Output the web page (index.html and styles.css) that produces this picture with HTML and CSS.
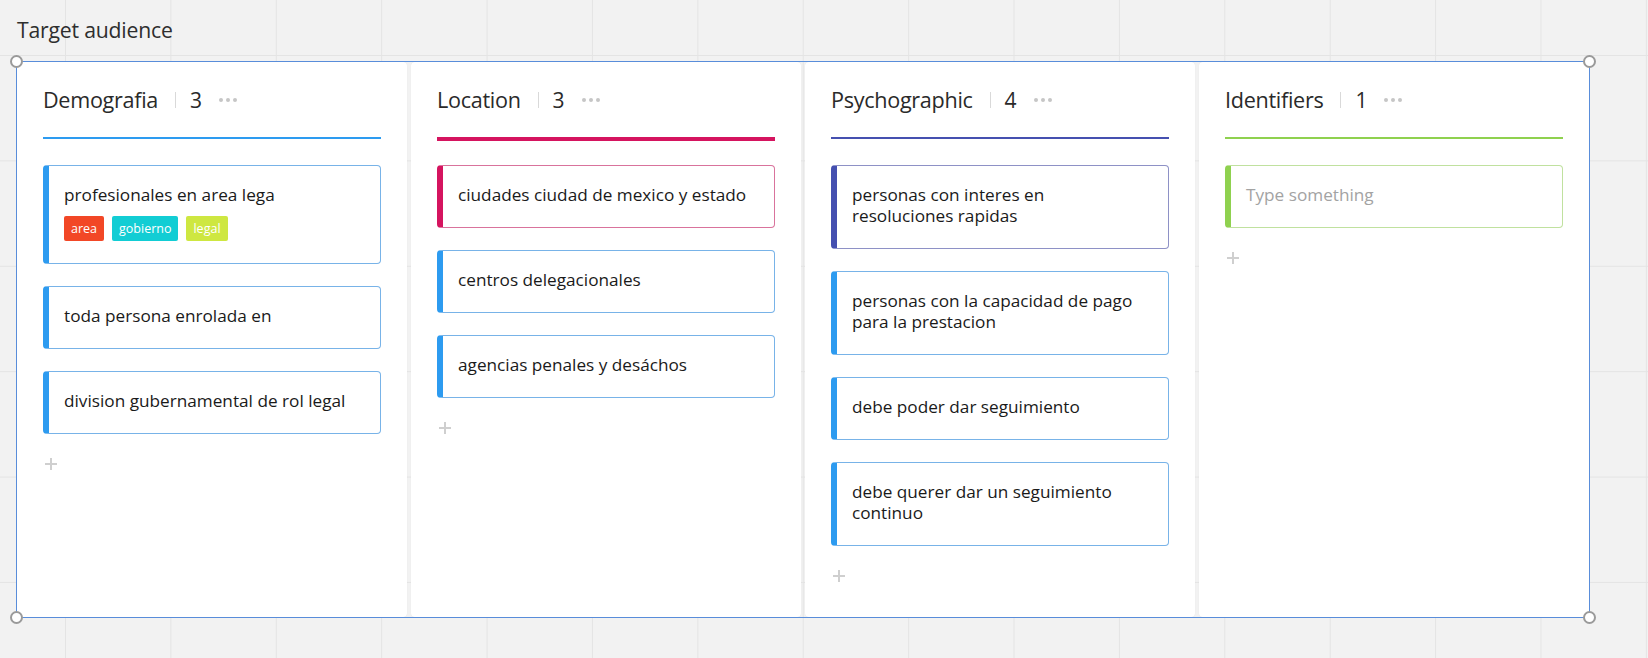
FILE: index.html
```html
<!DOCTYPE html>
<html lang="en">
<head>
<meta charset="utf-8">
<title>Target audience</title>
<link rel="stylesheet" href="styles.css">
</head>
<body>
<div class="board">
  <div class="frame-title">Target audience</div>
  <div class="frame">
    <span class="handle tl"></span>
    <span class="handle tr"></span>
    <span class="handle bl"></span>
    <span class="handle br"></span>

    <section class="column">
      <header class="col-head blue">
        <span class="col-title">Demografia</span>
        <span class="sep"></span>
        <span class="count">3</span>
        <span class="dots"><i></i><i></i><i></i></span>
      </header>
      <div class="cards">
        <div class="card c-blue">
          <div class="card-text">profesionales en area lega</div>
          <div class="tags">
            <span class="tag t-red">area</span>
            <span class="tag t-cyan">gobierno</span>
            <span class="tag t-lime">legal</span>
          </div>
        </div>
        <div class="card c-blue"><div class="card-text">toda persona enrolada en</div></div>
        <div class="card c-blue"><div class="card-text">division gubernamental de rol legal</div></div>
        <div class="add"><span class="plus"></span></div>
      </div>
    </section>

    <section class="column">
      <header class="col-head pink">
        <span class="col-title">Location</span>
        <span class="sep"></span>
        <span class="count">3</span>
        <span class="dots"><i></i><i></i><i></i></span>
      </header>
      <div class="cards">
        <div class="card c-pink"><div class="card-text">ciudades ciudad de mexico y estado</div></div>
        <div class="card c-blue"><div class="card-text">centros delegacionales</div></div>
        <div class="card c-blue"><div class="card-text">agencias penales y desáchos</div></div>
        <div class="add"><span class="plus"></span></div>
      </div>
    </section>

    <section class="column">
      <header class="col-head purple">
        <span class="col-title">Psychographic</span>
        <span class="sep"></span>
        <span class="count">4</span>
        <span class="dots"><i></i><i></i><i></i></span>
      </header>
      <div class="cards">
        <div class="card c-purple"><div class="card-text">personas con interes en<br>resoluciones rapidas</div></div>
        <div class="card c-blue"><div class="card-text">personas con la capacidad de pago<br>para la prestacion</div></div>
        <div class="card c-blue"><div class="card-text">debe poder dar seguimiento</div></div>
        <div class="card c-blue"><div class="card-text">debe querer dar un seguimiento<br>continuo</div></div>
        <div class="add"><span class="plus"></span></div>
      </div>
    </section>

    <section class="column">
      <header class="col-head green">
        <span class="col-title">Identifiers</span>
        <span class="sep"></span>
        <span class="count">1</span>
        <span class="dots"><i></i><i></i><i></i></span>
      </header>
      <div class="cards">
        <div class="card c-green"><div class="card-text placeholder">Type something</div></div>
        <div class="add"><span class="plus"></span></div>
      </div>
    </section>
  </div>
</div>
</body>
</html>
```
FILE: styles.css
```css
* { box-sizing: border-box; }

html, body {
  margin: 0;
  padding: 0;
}

body {
  width: 1648px;
  height: 658px;
  overflow: hidden;
  font-family: "Open Sans", "Noto Sans", "DejaVu Sans", sans-serif;
  color: #1f1f1f;
  background-color: #f2f2f2;
  background-image:
    linear-gradient(to right, #e4e4e4 1px, transparent 1px),
    linear-gradient(to bottom, #e4e4e4 1px, transparent 1px);
  background-size: 105.4px 105.4px;
  background-position: 65px 55px;
}

.board {
  padding: 0 0 0 16px;
}

.frame-title {
  height: 61px;
  padding: 15px 0 0 1px;
  font-size: 21.2px;
  line-height: 30px;
  color: #2e2e2e;
  letter-spacing: -0.2px;
}

.frame {
  position: relative;
  width: 1574px;
  height: 557px;
  border: 1px solid #5a8fdc;
  display: flex;
  gap: 4px;
}

.handle {
  position: absolute;
  width: 13px;
  height: 13px;
  border-radius: 50%;
  border: 2px solid #9a9a9a;
  background: #fff;
  z-index: 2;
}
.handle.tl { left: -7px; top: -7px; }
.handle.tr { right: -7px; top: -7px; }
.handle.bl { left: -7px; bottom: -7px; }
.handle.br { right: -7px; bottom: -7px; }

.column {
  flex: 0 0 390px;
  background: #fff;
  border-radius: 4px;
  padding: 0 26px;
  box-shadow: 0 0 1px rgba(0,0,0,0.08);
}

.col-head {
  height: 77px;
  display: flex;
  align-items: center;
  padding: 0;
  border-bottom: 2px solid #2d9bf0;
}
.col-head.blue { border-bottom-color: #2d9bf0; }
.col-head.pink { border-bottom: 4px solid #d5145f; height: 79px; }
.col-head.purple { border-bottom-color: #4550b0; }
.col-head.green { border-bottom-color: #8fd14f; }

.col-title {
  font-size: 21.6px;
  line-height: 30px;
  color: #2a2a2a;
  letter-spacing: -0.3px;
}

.sep {
  width: 1px;
  height: 16px;
  background: #d9d9d9;
  margin: 0 14px 0 17px;
}

.count {
  font-size: 21px;
  line-height: 30px;
  color: #2a2a2a;
}

.dots {
  display: flex;
  gap: 3px;
  margin-left: 17px;
}
.dots i {
  width: 4px;
  height: 4px;
  border-radius: 50%;
  background: #c6c6c6;
}

.cards {
  padding-top: 26px;
  display: flex;
  flex-direction: column;
  gap: 22px;
}
.col-head.pink + .cards { padding-top: 24px; }

.card {
  border: 1px solid #78b3e8;
  border-left: 6px solid #2d9bf0;
  border-radius: 4px;
  padding: 18px 12px 22px 15px;
  background: #fff;
}
.card.c-blue { border-color: #78b3e8; border-left-color: #2d9bf0; }
.card.c-pink { border-color: #d9739c; border-left-color: #d5145f; }
.card.c-purple { border-color: #8e91c6; border-left-color: #4550b0; }
.card.c-green { border-color: #c0e19f; border-left-color: #8fd14f; }

.card-text {
  font-size: 17.2px;
  line-height: 21px;
  color: #1a1a1a;
  letter-spacing: 0;
  white-space: nowrap;
}
.card-text.placeholder { color: #a3a3a3; }

.tags {
  display: flex;
  gap: 8px;
  margin-top: 11px;
}
.tag {
  height: 25px;
  line-height: 25px;
  padding: 0 7px;
  font-size: 12.5px;
  color: #fff;
  border-radius: 2px;
}
.t-red { background: #f24726; }
.t-cyan { background: #12cdd4; }
.t-lime { background: #cee741; }

.add {
  height: 20px;
  display: flex;
  align-items: center;
  padding-left: 2px;
  margin-top: -2px;
}
.plus {
  position: relative;
  width: 12px;
  height: 12px;
}
.plus::before, .plus::after {
  content: "";
  position: absolute;
  background: #cfcfcf;
}
.plus::before { left: 0; top: 5px; width: 12px; height: 1.5px; }
.plus::after { left: 5px; top: 0; width: 1.5px; height: 12px; }
```
